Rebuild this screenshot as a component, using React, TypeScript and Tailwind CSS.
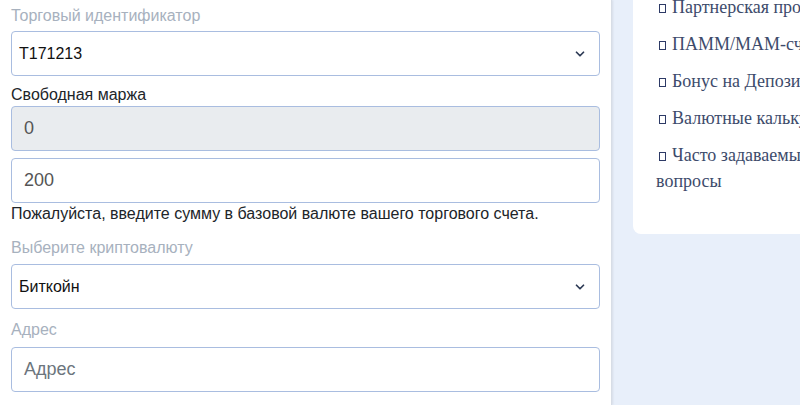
import { ChevronDown } from 'lucide-react'

const sideLinks = [
  'Партнерская программа',
  'ПАММ/МАМ-счета',
  'Бонус на Депозит',
  'Валютные калькуляторы',
  'Часто задаваемые вопросы',
]

function Label({ children, muted = true }: { children: string; muted?: boolean }) {
  return (
    <div className={`h-[22px] text-[16px] leading-[22px] ${muted ? 'text-[#a7b1be]' : 'text-[#212529]'}`}>
      {children}
    </div>
  )
}

function SelectBox({ value }: { value: string }) {
  return (
    <div className="flex h-[45px] items-center justify-between rounded-[4px] border border-[#a9bde0] bg-white pl-[7px] pr-[12px]">
      <span className="text-[16px] text-[#111]">{value}</span>
      <ChevronDown className="h-[14px] w-[14px] text-[#2d3a55]" strokeWidth={3} />
    </div>
  )
}

export default function App() {
  return (
    <div className="flex h-[405px] w-[800px] overflow-hidden bg-[#e8effa] font-['Liberation_Sans',Arial,sans-serif]">
      <div className="w-[612px] shrink-0 border-r border-[#d7dde6] bg-white px-[11px] pt-[5px] shadow-[1px_0_2px_rgba(0,0,0,0.08)]">
        <Label>Торговый идентификатор</Label>
        <div className="mt-[4px]">
          <SelectBox value="T171213" />
        </div>

        <div className="mt-[8px]">
          <Label muted={false}>Свободная маржа</Label>
        </div>
        <div className="flex h-[45px] items-center rounded-[4px] border border-[#a9bde0] bg-[#e9ecef] px-[12px] text-[18px] text-[#555]">
          0
        </div>
        <div className="mt-[7px] flex h-[45px] items-center rounded-[4px] border border-[#a9bde0] bg-white px-[12px] text-[18px] text-[#555]">
          200
        </div>
        <p className="h-[20px] text-[16px] leading-[22px] text-[#212529]">
          Пожалуйста, введите сумму в базовой валюте вашего торгового счета.
        </p>

        <div className="mt-[14px]">
          <Label>Выберите криптовалюту</Label>
        </div>
        <div className="mt-[5px]">
          <SelectBox value="Биткойн" />
        </div>

        <div className="mt-[10px]">
          <Label>Адрес</Label>
        </div>
        <div className="mt-[6px] flex h-[45px] items-center rounded-[4px] border border-[#a9bde0] bg-white px-[12px] text-[18px] text-[#6c757d]">
          Адрес
        </div>
      </div>

      <div className="min-w-0 flex-1 pl-[21px]">
        <div className="-mt-[6px] w-[280px] rounded-bl-[8px] bg-white pb-[40px] pl-[23px] font-['Liberation_Serif','Times_New_Roman',serif] text-[18px] leading-[26px] text-[#3d4b6b]">
          <ul className="w-[208px]">
            {sideLinks.map((link) => (
              <li key={link} className="mb-[11px] last:mb-0">
                <span className="ml-[3px] mr-[6px] inline-block h-[9px] w-[7px] border border-[#2d3a66] align-[0px]" />
                {link}
              </li>
            ))}
          </ul>
        </div>
      </div>
    </div>
  )
}
